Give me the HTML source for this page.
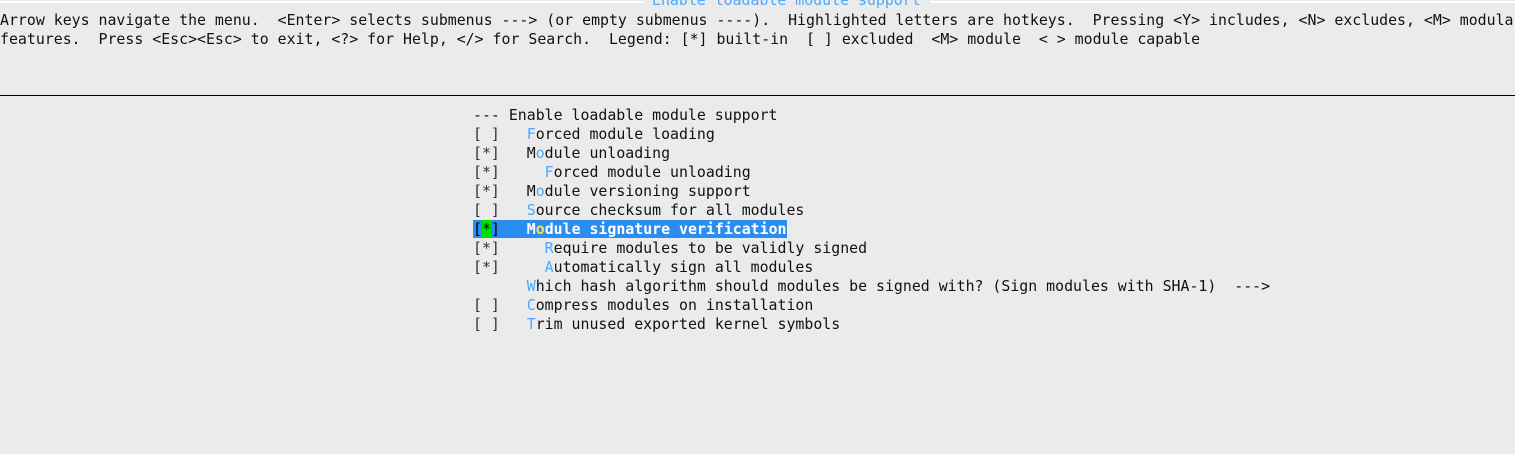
<html><head><style>
body{margin:0;width:1515px;height:454px;background:#ebebeb;overflow:hidden;position:relative;font-family:"DejaVu Sans Mono","Liberation Mono",monospace;font-size:14.88px;color:#111}
pre{margin:0;font:inherit;position:absolute;line-height:19px;white-space:pre}
.h{color:#4aa8ff}
.b{color:#333}
.sel{background:#2a8ef0;color:#fff;font-weight:bold}
.g{background:#00e000;color:#000}
</style></head><body>
<div style="position:absolute;left:0;top:1px;width:644px;height:2px;background:#fff"></div>
<div style="position:absolute;left:930px;top:1px;width:585px;height:2px;background:#fff"></div>
<pre style="left:652px;top:-9px;color:#4aa8ff">Enable loadable module support</pre>
<pre style="left:0;top:11px">Arrow keys navigate the menu.  &lt;Enter&gt; selects submenus ---&gt; (or empty submenus ----).  Highlighted letters are hotkeys.  Pressing &lt;Y&gt; includes, &lt;N&gt; excludes, &lt;M&gt; modularizes
features.  Press &lt;Esc&gt;&lt;Esc&gt; to exit, &lt;?&gt; for Help, &lt;/&gt; for Search.  Legend: [*] built-in  [ ] excluded  &lt;M&gt; module  &lt; &gt; module capable</pre>
<div style="position:absolute;left:0;top:95px;width:1515px;height:1px;background:#000"></div>
<pre style="left:473px;top:106px">--- Enable loadable module support
<span class="b">[ ]</span>   <span class="h">F</span>orced module loading
<span class="b">[*]</span>   M<span class="h">o</span>dule unloading
<span class="b">[*]</span>     <span class="h">F</span>orced module unloading
<span class="b">[*]</span>   M<span class="h">o</span>dule versioning support
<span class="b">[ ]</span>   <span class="h">S</span>ource checksum for all modules
<span class="sel"><span style="color:#000;font-weight:normal">[<span class="g">*</span>]</span>   M<span style="color:#f0e060">o</span>dule signature verification</span>
<span class="b">[*]</span>     <span class="h">R</span>equire modules to be validly signed
<span class="b">[*]</span>     <span class="h">A</span>utomatically sign all modules
      <span class="h">W</span>hich hash algorithm should modules be signed with? (Sign modules with SHA-1)  ---&gt;
<span class="b">[ ]</span>   <span class="h">C</span>ompress modules on installation
<span class="b">[ ]</span>   <span class="h">T</span>rim unused exported kernel symbols</pre>
</body></html>
